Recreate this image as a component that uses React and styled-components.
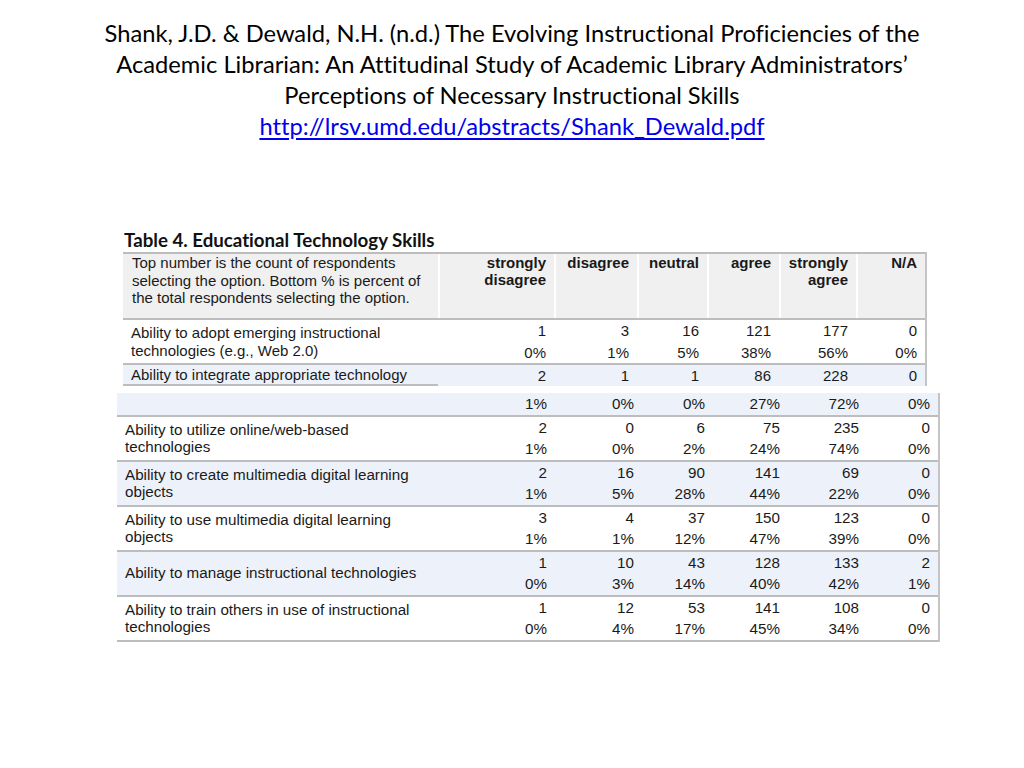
import React from 'react';
import styled, { createGlobalStyle } from 'styled-components';

const GlobalStyle = createGlobalStyle`
  html, body {
    margin: 0;
    padding: 0;
    background: #ffffff;
  }
`;

const Slide = styled.div`
  width: 1024px;
  height: 768px;
  background: #ffffff;
  overflow: hidden;
`;

const Title = styled.h1`
  margin: 0;
  padding-top: 18px;
  font-family: Lato, 'Open Sans', sans-serif;
  font-weight: 400;
  font-size: 23.7px;
  line-height: 31px;
  font-variant-ligatures: none;
  color: #000000;
  text-align: center;
`;

const TitleLink = styled.a`
  color: #0000ee;
  text-decoration: underline;
  text-underline-offset: 3px;
`;

const Figure = styled.div`
  margin-top: 86px;
  font-family: 'Liberation Sans', Arial, sans-serif;
  color: #1a1a1a;
`;

const Part = styled.div`
  margin-left: ${({ left }) => left}px;
  margin-top: ${({ gap }) => gap || 0}px;
  width: ${({ width }) => width}px;
`;

const Caption = styled.div`
  font-family: Lato, 'Open Sans', sans-serif;
  font-weight: 700;
  font-size: 18.7px;
  line-height: 24px;
  font-variant-ligatures: none;
  color: #111111;
  padding-left: 1px;
`;

const Grid = styled.div`
  border-right: 2px solid #c4c4c4;
`;

const Row = styled.div`
  display: grid;
  grid-template-columns: ${({ cols }) => cols};
  grid-template-rows: ${({ rows }) => rows};
  background: ${({ tone }) =>
    tone === 'head' ? '#f0f0f0' : tone === 'blue' ? '#edf2fa' : '#ffffff'};
  border-top: ${({ top }) => (top ? '2px solid #bdbdbd' : 'none')};
  border-bottom: ${({ open }) => (open ? 'none' : '2px solid #bdbdbd')};
`;

const Label = styled.div`
  grid-column: 1;
  grid-row: ${({ span }) => `1 / span ${span}`};
  align-self: ${({ top, rule }) => (top ? 'start' : rule ? 'stretch' : 'center')};
  display: ${({ rule }) => (rule ? 'flex' : 'block')};
  align-items: center;
  padding: ${({ top }) => (top ? '0 8px 0 9px' : '0 8px 0 8px')};
  font-size: ${({ size }) => size || 15}px;
  line-height: 17.5px;
  border-bottom: ${({ rule }) => (rule ? '2px solid #bdbdbd' : 'none')};
`;

const HeadCell = styled.div`
  text-align: right;
  padding: 0 8px 0 2px;
  font-size: 15px;
  font-weight: 700;
  line-height: 17px;
  border-left: 2px solid #ffffff;
`;

const Num = styled.div`
  text-align: right;
  padding-right: 8px;
  font-size: ${({ size }) => size || 15}px;
  line-height: 21px;
  align-self: center;
`;

const COLS_A = '315px 116px 83px 70px 72px 77px 69px';
const COLS_B = '321px 117px 87px 71px 75px 79px 71px';

const heads = ['strongly\ndisagree', 'disagree', 'neutral', 'agree', 'strongly\nagree', 'N/A'];

const rowsB = [
  {
    label: 'Ability to utilize online/web-based\ntechnologies',
    counts: [2, 0, 6, 75, 235, 0],
    pcts: ['1%', '0%', '2%', '24%', '74%', '0%'],
    tone: 'white',
  },
  {
    label: 'Ability to create multimedia digital learning\nobjects',
    counts: [2, 16, 90, 141, 69, 0],
    pcts: ['1%', '5%', '28%', '44%', '22%', '0%'],
    tone: 'blue',
  },
  {
    label: 'Ability to use multimedia digital learning\nobjects',
    counts: [3, 4, 37, 150, 123, 0],
    pcts: ['1%', '1%', '12%', '47%', '39%', '0%'],
    tone: 'white',
  },
  {
    label: 'Ability to manage instructional technologies',
    counts: [1, 10, 43, 128, 133, 2],
    pcts: ['0%', '3%', '14%', '40%', '42%', '1%'],
    tone: 'blue',
  },
  {
    label: 'Ability to train others in use of instructional\ntechnologies',
    counts: [1, 12, 53, 141, 108, 0],
    pcts: ['0%', '4%', '17%', '45%', '34%', '0%'],
    tone: 'white',
  },
];

const lines = (text) =>
  text.split('\n').map((t, i) => (
    <React.Fragment key={i}>
      {i > 0 && <br />}
      {t}
    </React.Fragment>
  ));

const numbers = (values, size) =>
  values.map((v, i) => (
    <Num key={i} size={size}>
      {v}
    </Num>
  ));

const App = () => (
  <>
    <GlobalStyle />
    <Slide>
      <Title>
        Shank, J.D. &amp; Dewald, N.H. (n.d.) The Evolving Instructional Proficiencies of the
        <br />
        Academic Librarian: An Attitudinal Study of Academic Library Administrators’
        <br />
        Perceptions of Necessary Instructional Skills
        <br />
        <TitleLink href="#">http://lrsv.umd.edu/abstracts/Shank_Dewald.pdf</TitleLink>
      </Title>

      <Figure>
        <Part left={123} width={804}>
          <Caption>Table 4. Educational Technology Skills</Caption>
          <Grid>
            <Row cols={COLS_A} rows="64px" tone="head" top>
              <Label span={1} top>
                {lines(
                  'Top number is the count of respondents\nselecting the option. Bottom % is percent of\nthe total respondents selecting the option.'
                )}
              </Label>
              {heads.map((h) => (
                <HeadCell key={h}>{lines(h)}</HeadCell>
              ))}
            </Row>
            <Row cols={COLS_A} rows="21.5px 21.5px">
              <Label span={2}>
                {lines('Ability to adopt emerging instructional\ntechnologies (e.g., Web 2.0)')}
              </Label>
              {numbers([1, 3, 16, 121, 177, 0])}
              {numbers(['0%', '1%', '5%', '38%', '56%', '0%'])}
            </Row>
            <Row cols={COLS_A} rows="21px" tone="blue" open>
              <Label span={1} rule>
                Ability to integrate appropriate technology
              </Label>
              {numbers([2, 1, 1, 86, 228, 0])}
            </Row>
          </Grid>
        </Part>

        <Part left={117} width={823} gap={7}>
          <Grid>
            <Row cols={COLS_B} rows="21.5px" tone="blue">
              <Label span={1} />
              {numbers(['1%', '0%', '0%', '27%', '72%', '0%'], 15.2)}
            </Row>
            {rowsB.map((r) => (
              <Row key={r.label} cols={COLS_B} rows="21.5px 21.5px" tone={r.tone}>
                <Label span={2} size={15.2}>
                  {lines(r.label)}
                </Label>
                {numbers(r.counts, 15.2)}
                {numbers(r.pcts, 15.2)}
              </Row>
            ))}
          </Grid>
        </Part>
      </Figure>
    </Slide>
  </>
);

export default App;
